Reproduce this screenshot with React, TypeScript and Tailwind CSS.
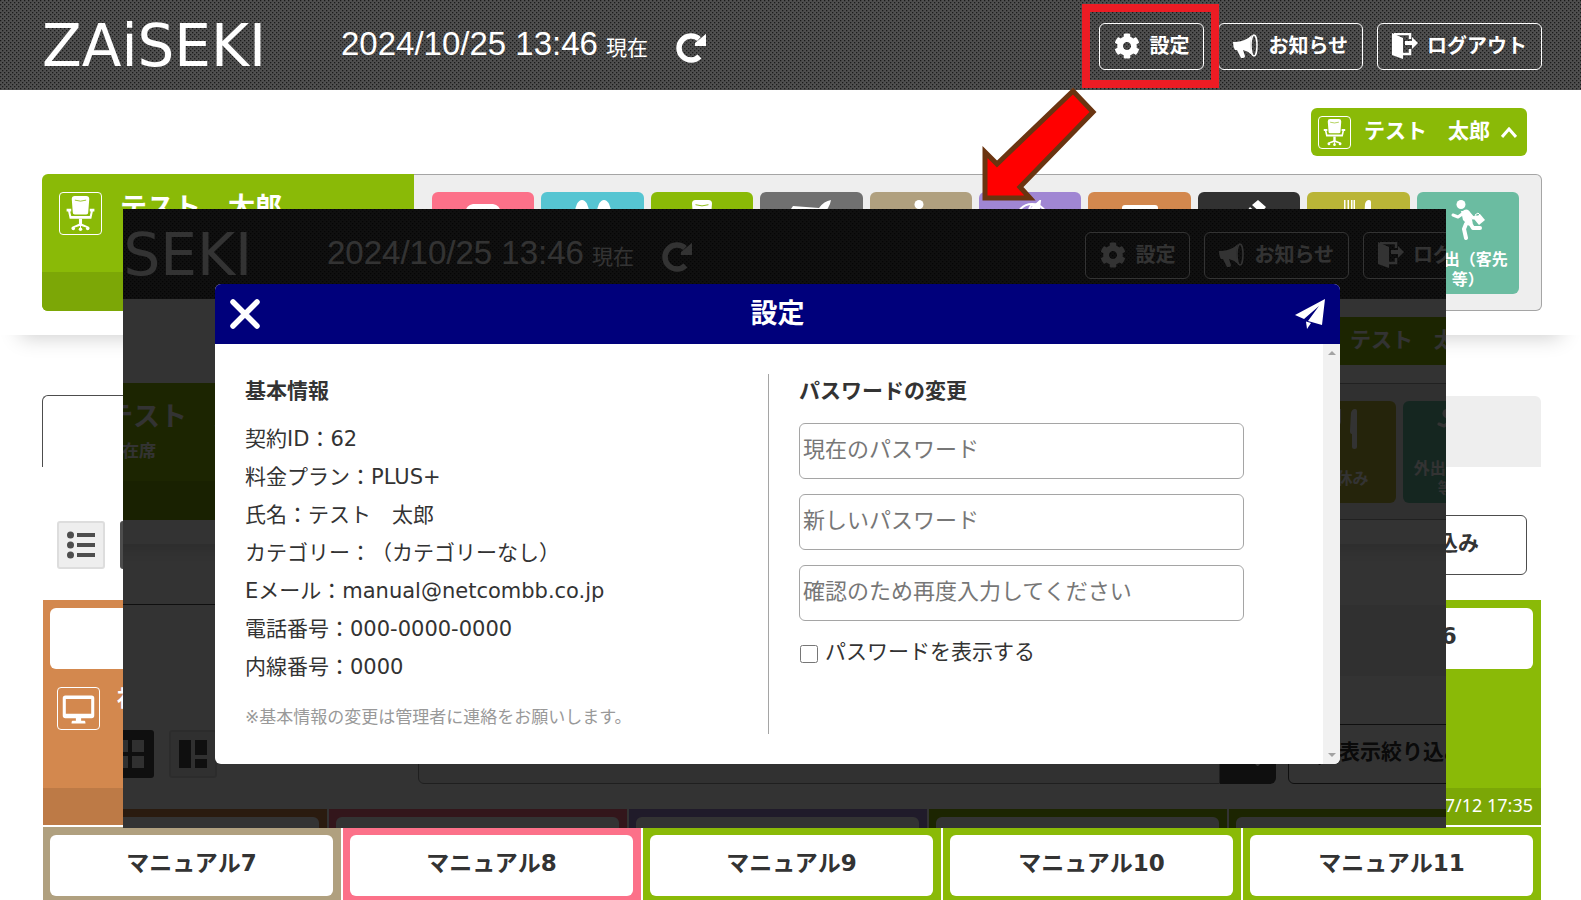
import { useId, useState } from "react";
import type { ReactNode } from "react";
import { FaCog, FaSearch, FaFilter } from "react-icons/fa";

const statuses = [
  { label: "休暇", color: "bg-[#fc7189]", icon: <PillowIcon /> },
  { label: "離席", color: "bg-[#56c5d2]", icon: <FootIcon /> },
  { label: "在席", color: "bg-[#8aba07]", icon: <ChairIcon /> },
  { label: "出張", color: "bg-[#707070]", icon: <PlaneIcon /> },
  { label: "退社", color: "bg-[#b0a07f]", icon: <PersonIcon /> },
  { label: "会議", color: "bg-[#a086d3]", icon: <GlobeIcon /> },
  { label: "社内", color: "bg-[#d3884e]", icon: <MonitorIcon /> },
  { label: "作業中", color: "bg-[#313131]", icon: <HammerIcon /> },
  { label: "昼休み", color: "bg-[#bab537]", icon: <MealIcon /> },
  { label: "外出（客先等）", color: "bg-[#6bbca1]", icon: <RunIcon /> },
];

const members = [
  { name: "マニュアル2", color: "bg-[#d3884e]", status: "社内", icon: <MonitorIcon />, time: "07/12 17:35" },
  { name: "マニュアル3", color: "bg-[#fc7189]", status: "休暇", icon: <PillowIcon />, time: "07/12 17:35" },
  { name: "マニュアル4", color: "bg-[#a086d3]", status: "会議", icon: <GlobeIcon />, time: "07/12 17:35" },
  { name: "マニュアル5", color: "bg-[#8aba07]", status: "在席", icon: <ChairIcon />, time: "07/12 17:35" },
  { name: "マニュアル6", color: "bg-[#8aba07]", status: "在席", icon: <ChairIcon />, time: "07/12 17:35" },
  { name: "マニュアル7", color: "bg-[#b0a07f]", status: "退社", icon: <PersonIcon />, time: "07/12 17:35" },
  { name: "マニュアル8", color: "bg-[#fc7189]", status: "休暇", icon: <PillowIcon />, time: "07/12 17:35" },
  { name: "マニュアル9", color: "bg-[#8aba07]", status: "在席", icon: <ChairIcon />, time: "07/12 17:35" },
  { name: "マニュアル10", color: "bg-[#8aba07]", status: "在席", icon: <ChairIcon />, time: "07/12 17:35" },
  { name: "マニュアル11", color: "bg-[#8aba07]", status: "在席", icon: <ChairIcon />, time: "07/12 17:35" },
];

const info = [
  ["契約ID", "62"],
  ["料金プラン", "PLUS+"],
  ["氏名", "テスト　太郎"],
  ["カテゴリー", "（カテゴリーなし）"],
  ["Eメール", "manual@netcombb.co.jp"],
  ["電話番号", "000-0000-0000"],
  ["内線番号", "0000"],
];

function ChairIcon() {
  return (
    <svg viewBox="0 0 27 34" className="h-full w-full" fill="currentColor">
      <path d="M8 0h11q3 0 3 3l-1 13q0 2-2 2H8q-2 0-2-2L5 3q0-3 3-3z" />
      <path d="M8 4q5.500 2 11 0" fill="none" stroke="#8aba07" strokeWidth="0.800" />
      <path d="M0 12.500h4.500v2.500H3.500l1 4.500h18l1-4.500h-1v-2.500H27v2.500h-1.500l-1.500 7H3L1.500 15H0z" />
      <path d="M12 22h3v5l7 3v1.500l-8.500-2.500-8.500 2.500V30l7-3z" />
      <circle cx="6.500" cy="31.500" r="1.700" />
      <circle cx="13.500" cy="32.300" r="1.700" />
      <circle cx="20.500" cy="31.500" r="1.700" />
      <path d="M13 27h1v5h-1z" />
    </svg>
  );
}

function PillowIcon() {
  return (
    <svg viewBox="0 0 40 40" className="h-full w-full" fill="currentColor">
      <path d="M10 4h20q7 1 8 9v15H2V13q1-8 8-9z" />
      <path d="M0 28h40v8h-4v-3H4v3H0z" />
    </svg>
  );
}

function FootIcon() {
  return (
    <svg viewBox="0 0 40 40" className="h-full w-full" fill="currentColor">
      <ellipse cx="9" cy="13" rx="7" ry="13" />
      <ellipse cx="31" cy="13" rx="7" ry="13" />
      <ellipse cx="10" cy="34" rx="5" ry="6" />
      <ellipse cx="30" cy="34" rx="5" ry="6" />
    </svg>
  );
}

function PlaneIcon() {
  return (
    <svg viewBox="0 0 40 40" className="h-full w-full" fill="currentColor">
      <path d="M40 0q-7 1-12 8L2 6l-2 3 19 8-9 9-7-1-3 3 9 4 4 8 3-3-1-7 8-8 7 17 3-2-2-21q8-9 9-16z" />
    </svg>
  );
}

function PersonIcon() {
  return (
    <svg viewBox="0 0 40 40" className="h-full w-full" fill="currentColor">
      <circle cx="18" cy="4.500" r="4.500" />
      <path d="M15 10l9-1 4 6 6 2v3l-8-2-2 8 3 13h-4l-4-12-5 12h-4l5-16V14l-5 5-2-2z" />
    </svg>
  );
}

function GlobeIcon() {
  return (
    <svg viewBox="0 0 40 40" className="h-full w-full" fill="none" stroke="currentColor" strokeWidth="2">
      <circle cx="22" cy="20" r="16" />
      <path d="M8 14q14-6 27 1M22 4q-10 14 0 32M22 4q12 14 0 32" />
      <path d="M30 1l-9 8 8-1z" fill="currentColor" />
    </svg>
  );
}

function MonitorIcon() {
  return (
    <svg viewBox="0 0 40 36" className="h-full w-full" fill="currentColor">
      <path fillRule="evenodd" d="M5 3h30q3 0 3 3v20q0 3-3 3H23v3h4q1 0 1 3H12q0-3 1-3h4v-3H5q-3 0-3-3V6q0-3 3-3zm.5 4v17h29V7z" />
    </svg>
  );
}

function HammerIcon() {
  return (
    <svg viewBox="0 0 40 40" className="h-full w-full" fill="currentColor">
      <path d="M29 0l8 7-5 6-9-8zM21 7l9 8L9 38l-8 2 2-9z" />
    </svg>
  );
}

function MealIcon() {
  return (
    <svg viewBox="0 0 40 40" className="h-full w-full" fill="currentColor">
      <path d="M6 0h1.500v11h2V0H11v11h2V0h1.500v11h1V0H17v13q-1 4-3 5v20q0 2-2.500 2T9 38V18q-3-1-3-5z" />
      <path d="M33 2v36q0 2-2.500 2T28 38V25q-2 0-2-3l1-18q1-4 4-4 2 0 2 2z" />
    </svg>
  );
}

function RunIcon() {
  return (
    <svg viewBox="0 0 34 40" className="h-full w-full">
      <circle cx="10" cy="4.500" r="4.500" fill="currentColor" />
      <path d="M10 11l8 0 3 9-6 3-3-3z" fill="currentColor" />
      <g fill="none" stroke="currentColor" strokeLinecap="round" strokeLinejoin="round">
        <path d="M14 12l-7 5-5-2" strokeWidth="3" />
        <path d="M17 12l5 6 4-1" strokeWidth="3" />
        <path d="M15 13l3 9" strokeWidth="7" />
        <path d="M15 24l-2 5 2 9" strokeWidth="4" />
        <path d="M19 23l3 5h7" strokeWidth="4" />
      </g>
      <path d="M23 19l6-5 5 6-6 5z" fill="currentColor" />
      <path d="M25 17l-1-2 3-2 2 2" fill="none" stroke="currentColor" />
    </svg>
  );
}

function MegaphoneIcon() {
  return (
    <svg viewBox="0 0 26 26" className="h-[26px] w-[26px]" fill="currentColor">
      <path d="M0 9h3q10-1 16-7-3 10 0 20-4-4-9-5l2 6q0 2-2 2H8l-4-8H2q-2-3-2-8z" />
      <ellipse cx="21" cy="12.500" rx="3" ry="10.500" fill="none" stroke="currentColor" strokeWidth="1.500" />
    </svg>
  );
}

function LogoutIcon() {
  return (
    <svg viewBox="0 0 26 26" className="h-[26px] w-[26px]" fill="currentColor">
      <path d="M0 0l11 5v21L0 22z" />
      <path d="M2 1h16v5M18 16v5h-7" fill="none" stroke="currentColor" strokeWidth="2.500" />
      <path d="M13 8h7V4l6 6-6 6v-4h-7z" />
    </svg>
  );
}

function ReloadIcon() {
  return (
    <svg viewBox="0 0 30 30" className="h-[30px] w-[30px]">
      <path d="M23.500 23.500A12 12 0 1 1 23 6" fill="none" stroke="currentColor" strokeWidth="5.500" />
      <path d="M30 1v12H18.500z" fill="currentColor" />
      <path d="M30 1v12H19v-3z" fill="currentColor" />
    </svg>
  );
}

function IconBox({ children }: { children: ReactNode }) {
  return (
    <span className="flex h-[43px] w-[43px] shrink-0 items-center justify-center rounded-sm border border-white p-[3px]">
      {children}
    </span>
  );
}

function HeaderButton({ icon, label }: { icon: ReactNode; label: string }) {
  return (
    <button className="flex h-[47px] items-center gap-[9px] rounded-md border border-white px-3.5 text-[20px] font-bold">
      {icon}
      <span>{label}</span>
    </button>
  );
}

function DotTexture() {
  const id = useId();
  return (
    <svg className="absolute inset-0 h-full w-full" aria-hidden="true">
      <defs>
        <pattern id={id} width="4" height="4" patternUnits="userSpaceOnUse">
          <rect width="4" height="4" fill="#505050" />
          <rect x="0" y="0" width="1.300" height="1.300" fill="#1a1a1a" />
          <rect x="2" y="2" width="1.300" height="1.300" fill="#1a1a1a" />
        </pattern>
      </defs>
      <rect width="100%" height="100%" fill={`url(#${id})`} />
    </svg>
  );
}

function Header() {
  return (
    <header className="relative bg-[#4d4d4d] text-white">
      <DotTexture />
      <div className="relative flex h-[90px] items-center pt-0.5 pr-[39px] pl-[42px]">
        <a href="#" className="w-[299px] text-[58px] leading-none">
          ZAiSEKI
        </a>
        <p className="flex items-baseline gap-2 whitespace-nowrap">
          <time className="font-['Liberation_Sans',sans-serif] text-[33px] leading-10">2024/10/25 13:46</time>
          <span className="text-[21px] leading-10">現在</span>
        </p>
        <button className="ml-7 pt-1" aria-label="更新">
          <ReloadIcon />
        </button>
        <nav className="ml-auto flex gap-3.5 whitespace-nowrap">
          <HeaderButton icon={<FaCog size={26} />} label="設定" />
          <HeaderButton icon={<MegaphoneIcon />} label="お知らせ" />
          <HeaderButton icon={<LogoutIcon />} label="ログアウト" />
        </nav>
      </div>
    </header>
  );
}

function StatusPanel() {
  return (
    <section className="flex h-[245px] flex-col bg-white pt-[18px] pr-[39px] pl-[42px] shadow-[0_22px_20px_-20px_rgba(0,0,0,0.2)]">
      <button className="mr-[15px] flex h-12 items-center self-end rounded-md bg-[#8aba07] pr-2.5 pl-[7px] text-[21px] font-bold text-white">
        <span className="h-[33px] w-[33px] rounded-sm border border-white p-[2px]">
          <ChairIcon />
        </span>
        <span className="ml-[13px]">テスト　太郎</span>
        <svg viewBox="0 0 16 11" className="ml-[11px] h-[11px] w-4" fill="none" stroke="currentColor" strokeWidth="3">
          <path d="M1 10l7-8 7 8" />
        </svg>
      </button>
      <div className="mt-[18px] flex h-[137px]">
        <div className="flex w-[372px] shrink-0 flex-col justify-between overflow-hidden rounded-l-md bg-[#8aba07] text-white">
          <div className="flex gap-[18px] px-[17px] pt-[18px]">
            <IconBox>
              <ChairIcon />
            </IconBox>
            <div>
              <p className="text-[27px] leading-8 font-bold">テスト　太郎</p>
              <p className="mt-1.5 ml-4 text-[17px] leading-6 font-bold">在席</p>
            </div>
          </div>
          <div className="h-[39px] bg-[#7ca706]" />
        </div>
        <div className="flex flex-1 gap-[7px] rounded-r-md border-y border-r border-[#a5a5a5] bg-[#eee] pt-[17px] pr-[22px] pl-[18px]">
          {statuses.map((s) => (
            <button
              key={s.label}
              className={`flex h-[102px] flex-1 flex-col items-center rounded-md px-2.5 pt-2 text-white ${s.color}`}
            >
              <span className="h-10 w-10">{s.icon}</span>
              <span className="mt-2.5 flex h-10 w-[80px] items-center justify-center text-[16px] leading-5 font-bold">
                {s.label}
              </span>
            </button>
          ))}
        </div>
      </div>
    </section>
  );
}

function Toolbar() {
  return (
    <div className="mt-12 flex h-[60px] items-center pr-[54px] pl-[57px]">
      <div className="flex gap-[15px]">
        <button aria-label="一覧" className="flex h-12 w-12 items-center justify-center rounded-[3px] border-2 border-[#ddd] bg-[#eee]">
          <svg viewBox="0 0 28 28" className="h-7 w-7" fill="#4d4d4d">
            <circle cx="3.500" cy="4" r="3.500" />
            <circle cx="3.500" cy="14" r="3.500" />
            <circle cx="3.500" cy="24" r="3.500" />
            <path d="M10 2h18v4H10zM10 12h18v4H10zM10 22h18v4H10z" />
          </svg>
        </button>
        <button aria-label="グリッド" className="flex h-12 w-12 items-center justify-center rounded-[3px] bg-[#4d4d4d]">
          <svg viewBox="0 0 28 28" className="h-7 w-7" fill="#eee">
            <path d="M0 0h12v12H0zM16 0h12v12H16zM0 16h12v12H0zM16 16h12v12H16z" />
          </svg>
        </button>
        <button aria-label="タイル" className="flex h-12 w-12 items-center justify-center rounded-[3px] border-2 border-[#ddd] bg-[#eee]">
          <svg viewBox="0 0 28 28" className="h-7 w-7" fill="#4d4d4d">
            <path d="M0 0h12v28H0zM16 0h12v15H16zM16 19h12v9H16z" />
          </svg>
        </button>
      </div>
      <form className="ml-[201px] flex h-full flex-1">
        <input aria-label="検索" className="h-full w-full flex-1 rounded-l-md border border-[#999] bg-[#f5f5f5]" />
        <button type="button" aria-label="検索する" className="flex w-14 items-center justify-center rounded-r-md bg-[#4d4d4d] text-white">
          <FaSearch size={23} />
        </button>
      </form>
      <button className="ml-3 flex h-full w-[225px] items-center gap-2.5 rounded-md border border-[#4d4d4d] bg-white pl-[18px] text-[21px] font-bold whitespace-nowrap text-[#333]">
        <FaFilter size={22} />
        <span className="pb-0.5">表示絞り込み</span>
      </button>
    </div>
  );
}

function MemberCard({ member }: { member: (typeof members)[number] }) {
  return (
    <li className={`flex h-[225px] flex-col pt-2 text-white ${member.color}`}>
      <h3 className="mr-2 ml-[7px] flex h-[61px] items-center justify-center rounded-md bg-white pb-1 text-[23px] font-bold text-[#333]">
        {member.name}
      </h3>
      <div className="mt-[18px] flex gap-[17px] px-3.5">
        <IconBox>{member.icon}</IconBox>
        <p className="text-[22px] leading-6 font-bold">{member.status}</p>
      </div>
      <p className="mt-auto h-[37px] bg-black/10 pr-2 text-right font-['Noto_Sans',sans-serif] text-[18px] leading-[34px]">
        {member.time}
      </p>
    </li>
  );
}

function Board() {
  return (
    <div className="bg-white">
      <Header />
      <StatusPanel />
      <div className="mt-[60px] flex h-[72px] pr-10 pl-[42px]">
        <div className="flex-1 rounded-tl-md border-t border-l border-[#4d4d4d]" />
        <div className="mt-px flex-1 rounded-tr-md bg-[#eee]" />
      </div>
      <Toolbar />
      <ul className="mt-[25px] grid grid-cols-5 gap-0.5 pr-10 pl-[43px]">
        {members.map((m) => (
          <MemberCard key={m.name} member={m} />
        ))}
      </ul>
    </div>
  );
}

function PasswordInput({ label, show }: { label: string; show: boolean }) {
  return (
    <input
      type={show ? "text" : "password"}
      aria-label={label}
      placeholder={label}
      className="h-14 w-[90%] rounded-md border border-[#a5a5a5] bg-white px-[3px] pb-1 text-[22px] placeholder:text-[#777]"
    />
  );
}

function SettingsDialog() {
  const [show, setShow] = useState(false);

  return (
    <div
      role="dialog"
      aria-label="設定"
      className="absolute top-[75px] right-[106px] left-[92px] overflow-hidden rounded-md bg-white text-[21px] text-[#333]"
    >
      <div className="flex h-[60px] items-center justify-between bg-[#00007b] px-[15px] text-white">
        <button aria-label="閉じる">
          <svg viewBox="0 0 30 30" className="h-[30px] w-[30px]" stroke="currentColor" strokeWidth="5.500" strokeLinecap="round">
            <path d="M3 3l24 24M27 3L3 27" />
          </svg>
        </button>
        <h2 className="text-[27px] font-bold">設定</h2>
        <button aria-label="送信">
          <svg viewBox="0 0 30 30" className="h-[30px] w-[30px]" fill="currentColor">
            <path d="M30 0L0 16l9 4L24 7 13 22l14 4z" />
            <path d="M11 22.500l5 1.500-4 6z" />
          </svg>
        </button>
      </div>
      <div className="flex h-[420px]">
        <div className="grid flex-1 grid-cols-2 p-[30px]">
          <section className="border-r border-[#a5a5a5]">
            <h3 className="mb-3 leading-[34px] font-bold">基本情報</h3>
            {info.map(([k, v]) => (
              <p key={k} className="leading-[38px] whitespace-nowrap">
                {k}：{v}
              </p>
            ))}
            <p className="mt-3.5 text-[17px] leading-[34px] text-[#999]">※基本情報の変更は管理者に連絡をお願いします。</p>
          </section>
          <section className="pl-[30px]">
            <h3 className="mb-[15px] leading-[34px] font-bold">パスワードの変更</h3>
            <div className="flex flex-col gap-[15px]">
              <PasswordInput label="現在のパスワード" show={show} />
              <PasswordInput label="新しいパスワード" show={show} />
              <PasswordInput label="確認のため再度入力してください" show={show} />
            </div>
            <label className="mt-3 flex items-center gap-[7px] leading-[38px]">
              <input
                type="checkbox"
                checked={show}
                onChange={(e) => setShow(e.target.checked)}
                className="mt-1 ml-px h-[18px] w-[18px]"
              />
              パスワードを表示する
            </label>
          </section>
        </div>
        <div className="flex w-[17px] flex-col items-center justify-between bg-[#f1f1f1] py-[7px]">
          <svg viewBox="0 0 8 4" className="h-1 w-2" fill="#a3a3a3">
            <path d="M0 4l4-4 4 4z" />
          </svg>
          <svg viewBox="0 0 8 4" className="h-1 w-2" fill="#a3a3a3">
            <path d="M0 0l4 4 4-4z" />
          </svg>
        </div>
      </div>
    </div>
  );
}

export default function App() {
  return (
    <main className="relative h-screen overflow-hidden bg-white font-['DejaVu_Sans','Noto_Sans_CJK_JP',sans-serif] [text-spacing-trim:space-all]">
      <Board />

      {/* highlight around the settings button */}
      <div className="pointer-events-none absolute top-1 right-[362px] h-[84px] w-[137px] border-8 border-[#ed1c24]" />

      {/* dimmed screen with the dialog open */}
      <div className="absolute top-[209px] right-[135px] left-[123px] h-[619px] overflow-hidden">
        <div className="-ml-[137px] w-screen" inert>
          <Board />
        </div>
        <div className="absolute inset-0 bg-black/80" />
        <SettingsDialog />
      </div>

      <svg viewBox="0 0 116 115" className="pointer-events-none absolute top-[86px] right-[483px] h-[115px] w-[116px]">
        <path d="M91 5l20 21-73 75 10 11H3V66l12 12z" fill="#f00" stroke="#6a3410" strokeWidth="5" />
      </svg>
    </main>
  );
}
